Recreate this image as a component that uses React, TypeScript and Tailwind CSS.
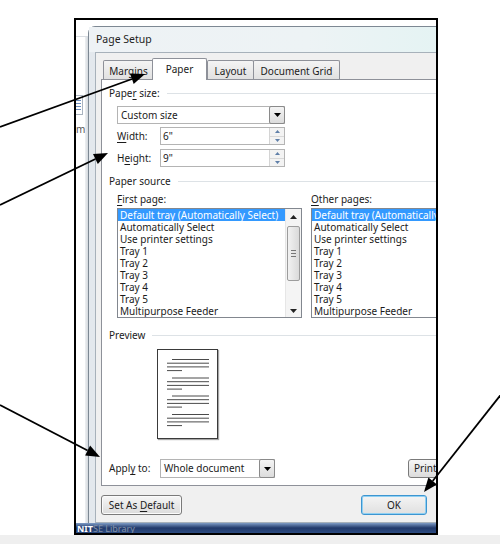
import React from "react";

function U({ children }: { children: React.ReactNode }) {
  return <span className="underline decoration-1 underline-offset-[2px]">{children}</span>;
}

function DownTri() {
  return (
    <svg width="7" height="4" viewBox="0 0 7 4">
      <polygon points="0,0 7,0 3.5,4" fill="#000" />
    </svg>
  );
}

function ComboBtn() {
  return (
    <div className="w-[16px] -my-px -mr-px flex items-center justify-center border border-[#8a8a8a] rounded-[2px] bg-gradient-to-b from-[#f4f4f4] to-[#dcdcdc]">
      <DownTri />
    </div>
  );
}

function Spin() {
  return (
    <div className="w-[15px] flex flex-col border-l border-[#d4d4d4]">
      <div className="flex-1 flex items-center justify-center bg-[#f3f3f3] border-b border-[#d8d8d8]">
        <svg width="5" height="3" viewBox="0 0 5 3">
          <polygon points="0,3 5,3 2.5,0" fill="#5f7fa8" />
        </svg>
      </div>
      <div className="flex-1 flex items-center justify-center bg-[#f3f3f3]">
        <svg width="5" height="3" viewBox="0 0 5 3">
          <polygon points="0,0 5,0 2.5,3" fill="#5f7fa8" />
        </svg>
      </div>
    </div>
  );
}

function Section({ children }: { children: React.ReactNode }) {
  return (
    <div className="flex items-center h-[12px] pl-[7px]">
      <span className="whitespace-nowrap leading-[12px]">{children}</span>
      <div className="flex-1 h-px bg-[#dde2e6] ml-[7px]" />
    </div>
  );
}

const items = [
  "Default tray (Automatically Select)",
  "Automatically Select",
  "Use printer settings",
  "Tray 1",
  "Tray 2",
  "Tray 3",
  "Tray 4",
  "Tray 5",
  "Multipurpose Feeder",
];

function ListItems() {
  return (
    <div className="flex-1 flex flex-col overflow-hidden">
      {items.map((t, i) => (
        <div
          key={t}
          className={
            "h-[12px] shrink-0 leading-[12px] pl-[2px] whitespace-nowrap " +
            (i === 0 ? "bg-[#3399ff] text-white" : "")
          }
        >
          {t}
        </div>
      ))}
    </div>
  );
}

function ScrollBar() {
  return (
    <div className="w-[16px] flex flex-col items-center bg-[#f4f4f4] border-l border-[#e6e6e6]">
      <div className="h-[15px] flex items-center justify-center">
        <svg width="7" height="4" viewBox="0 0 7 4">
          <polygon points="0,4 7,4 3.5,0" fill="#222" />
        </svg>
      </div>
      <div className="mt-[2px] w-[13px] h-[55px] rounded-[2px] border border-[#9c9c9c] bg-gradient-to-r from-[#f2f2f2] to-[#dadada] flex flex-col items-center justify-center gap-[2px]">
        <div className="w-[5px] h-px bg-[#777]" />
        <div className="w-[5px] h-px bg-[#777]" />
        <div className="w-[5px] h-px bg-[#777]" />
      </div>
      <div className="flex-1" />
      <div className="h-[13px] flex items-center justify-center">
        <svg width="7" height="4" viewBox="0 0 7 4">
          <polygon points="0,0 7,0 3.5,4" fill="#222" />
        </svg>
      </div>
    </div>
  );
}

function PreviewPage() {
  const groups = [10, 28.5, 46.5, 65];
  return (
    <div className="w-[61px] h-[90px] border border-[#3a3a3a] bg-white shadow-[1px_1px_1px_rgba(0,0,0,0.35)]">
      <svg width="59" height="88" viewBox="0 0 59 88">
        {groups.map((g) => (
          <g key={g} stroke="#4a4a4a" strokeWidth="1">
            <line x1="14" y1={g - 0.5} x2="51" y2={g - 0.5} />
            <line x1="9" y1={g + 3.2} x2="51" y2={g + 3.2} />
            <line x1="9" y1={g + 6.9} x2="51" y2={g + 6.9} />
            <line x1="9" y1={g + 10.6} x2="24" y2={g + 10.6} />
          </g>
        ))}
      </svg>
    </div>
  );
}

function Tab({ children, w, extra = "" }: { children: React.ReactNode; w: string; extra?: string }) {
  return (
    <div
      className={
        "h-[19px] shrink-0 border border-b-0 border-[#8e9199] rounded-t-[2px] bg-gradient-to-b from-[#f4f4f4] to-[#e1e1e1] flex items-center justify-center pt-[2px] whitespace-nowrap " +
        w +
        " " +
        extra
      }
    >
      <span>{children}</span>
    </div>
  );
}

function Arrows() {
  return (
    <svg className="absolute inset-0 pointer-events-none" width="500" height="544" viewBox="0 0 500 544">
      <g stroke="#000" strokeWidth="1.8" fill="none">
        <line x1="0" y1="127" x2="132" y2="79" />
        <line x1="0" y1="205" x2="95.4" y2="159" />
        <line x1="0" y1="405" x2="87.6" y2="450.5" />
        <line x1="503" y1="392" x2="432.7" y2="481" />
      </g>
      <g fill="#000">
        <polygon points="145,74 133.7,84 130,73.6" />
        <polygon points="108,153 97.8,164 93,154.1" />
        <polygon points="100,457 85.1,455.4 90.1,445.6" />
        <polygon points="424,492 437,484.4 428.4,477.6" />
      </g>
    </svg>
  );
}

export default function App() {
  return (
    <div className="relative w-[500px] h-[544px] bg-white overflow-hidden flex flex-col font-['Noto_Sans',sans-serif] text-[10px] text-[#1b1b1b]">
      <div className="h-[18px] shrink-0" />
      <div className="flex-1 pl-[74px]">
        <div className="w-[364px] h-[517px] border-2 border-black overflow-hidden flex flex-col bg-white">
          <div className="h-[503px] flex">
            {/* background window strip */}
            <div className="w-[12px] shrink-0 flex flex-col bg-white">
              <div className="h-[16px]" />
              <div className="h-px bg-[#d9dde2]" />
              <div className="flex-1 flex">
                <div className="w-[9px] flex flex-col">
                  <div className="mt-[58px] w-[7px] h-[20px] border border-l-0 border-[#a9b3bf] flex flex-col justify-center gap-[2px] pr-[1px]">
                    <div className="h-px bg-[#6d8fbf]" />
                    <div className="h-px bg-[#6d8fbf]" />
                    <div className="h-px bg-[#6d8fbf]" />
                    <div className="h-px bg-[#6d8fbf]" />
                  </div>
                  <div className="mt-[9px] text-[10px] leading-[10px] text-[#555] whitespace-nowrap">mn</div>
                </div>
                <div className="w-[3px] bg-gradient-to-r from-[#eef0f2] to-[#d4d9de]" />
              </div>
            </div>
            {/* dialog */}
            <div className="flex-1 overflow-hidden pt-[6px]">
              <div className="w-[440px] h-[498px] flex flex-col border border-[#7d8893] rounded-t-[7px] bg-gradient-to-r from-[#e3e8ed] via-[#e6eef1] to-[#d8eeef]">
                <div className="h-[25px] shrink-0 flex items-center pl-[7px] text-[10.5px] text-[#1e1e1e] bg-gradient-to-r from-[#eef2f5] via-[#edf3f5] to-[#dff3f2]">
                  <span>Page Setup</span>
                </div>
                <div className="flex-1 flex flex-col bg-[#f0f0f0] border border-[#a7b1ba] ml-[6px] mr-[6px] pl-[5px] pt-[5px]">
                  {/* tabs */}
                  <div className="flex items-end h-[21px] pl-[2px] shrink-0">
                    <Tab w="w-[51px]">Margins</Tab>
                    <div className="relative z-10 -ml-[2px] -mb-px w-[55px] h-[22px] shrink-0 border border-b-0 border-[#8e9199] rounded-t-[2px] bg-white flex items-center justify-center pb-[1px]">
                      <span>Paper</span>
                    </div>
                    <Tab w="w-[47px]">Layout</Tab>
                    <Tab w="w-[87px]" extra="-ml-px">Document Grid</Tab>
                  </div>
                  {/* panel */}
                  <div className="h-[407px] shrink-0 mr-[6px] border border-[#8e9199] bg-white flex flex-col">
                    <div className="mt-[7px]">
                      <Section>
                        Pape<U>r</U> size:
                      </Section>
                    </div>
                    <div className="mt-[7px] ml-[15px] w-[168px] h-[18px] border border-[#b4b4b4] flex">
                      <div className="flex-1 pl-[3px] leading-[16px]">Custom size</div>
                      <ComboBtn />
                    </div>
                    <div className="mt-[3px] ml-[15px] flex items-center h-[18px]">
                      <div className="w-[43px]">
                        <U>W</U>idth:
                      </div>
                      <div className="w-[125px] h-full border border-[#b4b4b4] flex">
                        <div className="flex-1 pl-[2px] leading-[16px]">6"</div>
                        <Spin />
                      </div>
                    </div>
                    <div className="mt-[4px] ml-[15px] flex items-center h-[18px]">
                      <div className="w-[43px]">
                        H<U>e</U>ight:
                      </div>
                      <div className="w-[125px] h-full border border-[#b4b4b4] flex">
                        <div className="flex-1 pl-[2px] leading-[16px]">9"</div>
                        <Spin />
                      </div>
                    </div>
                    <div className="mt-[8px]">
                      <Section>Paper source</Section>
                    </div>
                    <div className="mt-[6px] ml-[15px] flex h-[12px] leading-[12px]">
                      <div className="w-[194px]">
                        <U>F</U>irst page:
                      </div>
                      <div>
                        <U>O</U>ther pages:
                      </div>
                    </div>
                    <div className="mt-[3px] ml-[15px] flex gap-[9px]">
                      <div className="w-[185px] h-[110px] border border-[#82878f] flex">
                        <ListItems />
                        <ScrollBar />
                      </div>
                      <div className="w-[185px] h-[110px] border border-[#82878f] flex">
                        <ListItems />
                      </div>
                    </div>
                    <div className="mt-[11px]">
                      <Section>Preview</Section>
                    </div>
                    <div className="mt-[8px] ml-[55px]">
                      <PreviewPage />
                    </div>
                    <div className="mt-[20px] ml-[7px] flex items-center h-[19px]">
                      <div className="w-[51px] whitespace-nowrap">
                        Appl<U>y</U> to:
                      </div>
                      <div className="w-[115px] h-full border border-[#b4b4b4] flex">
                        <div className="flex-1 pl-[3px] leading-[17px]">Whole document</div>
                        <ComboBtn />
                      </div>
                      <div className="ml-[133px] h-full px-[5px] border border-[#7a7a7a] rounded-[3px] bg-gradient-to-b from-[#f6f6f6] to-[#dcdcdc] flex items-center whitespace-nowrap">
                        <span>Print Options...</span>
                      </div>
                    </div>
                  </div>
                  {/* buttons */}
                  <div className="mt-[9px] flex h-[20px] shrink-0">
                    <div className="w-[81px] h-full border border-[#7a7a7a] rounded-[3px] bg-gradient-to-b from-[#f6f6f6] to-[#dbdbdb] shadow-[inset_0_0_0_1px_#fbfbfb] flex items-center justify-center whitespace-nowrap">
                      <span>
                        Set As <U>D</U>efault
                      </span>
                    </div>
                    <div className="w-[179px] shrink-0" />
                    <div className="w-[66px] h-full border border-[#3d95d0] rounded-[3px] bg-gradient-to-b from-[#f4f4f4] to-[#e0e0e0] shadow-[inset_0_0_0_1px_#8fd0f3] flex items-center justify-center">
                      <span>OK</span>
                    </div>
                    <div className="ml-[10px] w-[66px] h-full border border-[#7a7a7a] rounded-[3px] bg-gradient-to-b from-[#f6f6f6] to-[#dbdbdb] flex items-center justify-center">
                      <span>Cancel</span>
                    </div>
                  </div>
                </div>
              </div>
            </div>
          </div>
          {/* taskbar */}
          <div className="h-[10px] shrink-0 bg-gradient-to-b from-[#7f9cc6] via-[#21396a] to-[#2d4c82] flex items-center pl-[1px] text-[9px] leading-[9px] font-bold text-white whitespace-nowrap overflow-hidden">
            <span>
              NIT<span className="font-normal text-[#8391a8]">SE Library</span>
            </span>
          </div>
        </div>
      </div>
      <div className="h-[9px] shrink-0 bg-[#efefef]" />
      <Arrows />
    </div>
  );
}
